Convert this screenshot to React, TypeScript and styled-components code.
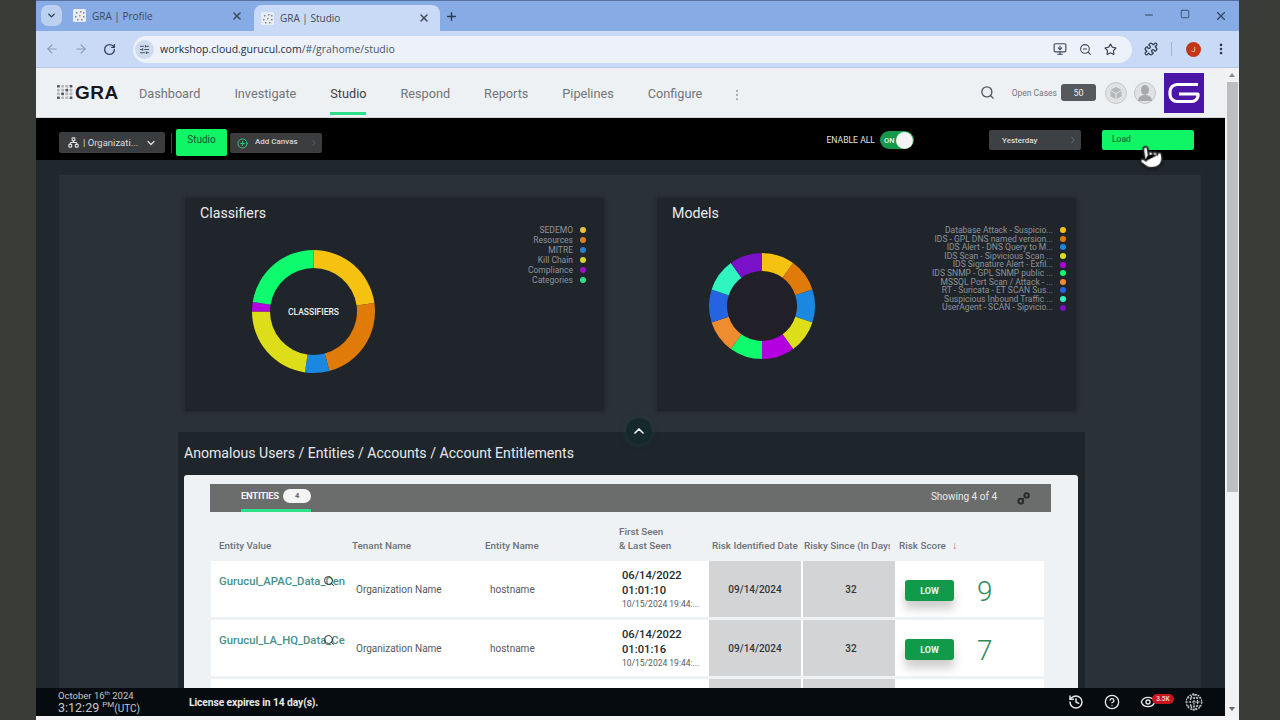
import React from 'react';
import styled, { createGlobalStyle } from 'styled-components';
import {
  ArrowLeft, ArrowRight, ChevronDown, ChevronRight, ChevronUp, CircleHelp, Eye, History, Minus,
  MonitorDown, MoreVertical, Network, Plus, PlusCircle, Pointer, Puzzle, RotateCw, Search,
  SlidersHorizontal, Square, Star, X, ZoomOut,
} from 'lucide-react';

const GlobalStyle = createGlobalStyle`
  html, body {
    margin: 0;
    padding: 0;
    height: 720px;
    overflow: hidden;
    background: #3a3c37;
  }
  * { box-sizing: border-box; }
`;

const Screen = styled.div`
  width: 1280px;
  height: 720px;
  padding: 0 41px 0 36px;
  background: #3a3c37;
  font-family: Roboto, 'Liberation Sans', sans-serif;
  position: relative;
  overflow: hidden;
`;

const Window = styled.div`
  height: 720px;
  display: flex;
  flex-direction: column;
  background: #f2f4f6;
  padding-bottom: 4px;
`;

/* browser chrome */
const TabStrip = styled.div`
  height: 31px;
  flex: none;
  display: flex;
  align-items: flex-end;
  background: #87abe4;
  border-top: 1px solid #56719f;
  padding-left: 5px;
  font-family: 'Open Sans', 'Noto Sans', sans-serif;
`;

const TabMenu = styled.div`
  width: 21px;
  height: 21px;
  margin: 0 4px 5px 0;
  border-radius: 7px;
  background: #bcd0ef;
  color: #2c3a50;
  display: flex;
  align-items: center;
  justify-content: center;
`;

const Tab = styled.div<{ $active?: boolean }>`
  width: ${p => (p.$active ? 186 : 184)}px;
  height: ${p => (p.$active ? 26 : 21)}px;
  margin: ${p => (p.$active ? '0' : '0 4px 5px 0')};
  padding: ${p => (p.$active ? '0 10px 0 7px' : '0 7px 0 7px')};
  border-radius: ${p => (p.$active ? '8px 8px 0 0' : '7px')};
  background: ${p => (p.$active ? '#c8daf5' : 'transparent')};
  color: #3d4a5c;
  font-size: 10px;
  display: flex;
  align-items: center;
  gap: 6px;
`;

const TabTitle = styled.span`
  flex: 1;
  white-space: nowrap;
`;

const NewTab = styled.div`
  margin: 0 0 8px 5px;
  color: #2c3a50;
  display: flex;
`;

const WindowControls = styled.div`
  margin-left: auto;
  align-self: center;
  display: flex;
  color: #33435c;
`;

const WindowControl = styled.div`
  width: 36px;
  display: flex;
  justify-content: center;
`;

const Toolbar = styled.div`
  height: 37px;
  flex: none;
  display: flex;
  align-items: center;
  background: #c8daf5;
  border-bottom: 1px solid #b7c8e2;
  padding-left: 1px;
`;

const NavButton = styled.div<{ $dim?: boolean }>`
  width: 29px;
  display: flex;
  justify-content: center;
  color: ${p => (p.$dim ? '#8c9db8' : '#37475e')};
`;

const Omnibox = styled.div`
  width: 999px;
  height: 27px;
  margin-left: 9px;
  padding: 0 15px 0 2px;
  border-radius: 14px;
  background: #edf2fa;
  display: flex;
  align-items: center;
  color: #3f4a5a;
`;

const SiteButton = styled.div`
  width: 19px;
  height: 19px;
  margin-right: 6px;
  border-radius: 50%;
  background: #cfdcef;
  display: flex;
  align-items: center;
  justify-content: center;
`;

const Url = styled.span`
  flex: 1;
  font-family: 'Open Sans', 'Noto Sans', sans-serif;
  font-size: 10.5px;
  color: #4a5565;
`;

const Host = styled.span`
  color: #25303e;
`;

const OmniIcons = styled.div`
  display: flex;
  align-items: center;
  gap: 12px;
`;

const ToolbarEnd = styled.div`
  flex: 1;
  display: flex;
  align-items: center;
  padding-left: 12px;
  color: #2f3d52;
`;

const ToolbarDivider = styled.div`
  width: 1px;
  height: 14px;
  margin: 0 14px 0 13px;
  background: #9fb1cc;
`;

const Avatar = styled.div`
  width: 15px;
  height: 15px;
  border-radius: 50%;
  background: #c23616;
  color: #f1d4c9;
  font-size: 8px;
  display: flex;
  align-items: center;
  justify-content: center;
  margin-right: 13px;
`;

/* app */
const Body = styled.div`
  flex: 1;
  min-height: 0;
  display: flex;
`;

const AppColumn = styled.div`
  width: 1189px;
  display: flex;
  flex-direction: column;
`;

const Scrollbar = styled.div`
  width: 14px;
  display: flex;
  flex-direction: column;
  align-items: center;
  background: #f1f2f3;
  padding: 5px 0;
`;

const ScrollArrow = styled.span<{ $down?: boolean }>`
  width: 0;
  height: 0;
  border-left: 3px solid transparent;
  border-right: 3px solid transparent;
  border-top: ${p => (p.$down ? '4px solid #666' : 'none')};
  border-bottom: ${p => (p.$down ? 'none' : '4px solid #888')};
`;

const ScrollThumb = styled.div`
  width: 11px;
  height: 410px;
  margin: 5px 0 auto;
  background: #bdbebf;
`;

const TopNav = styled.div`
  height: 50px;
  flex: none;
  display: flex;
  align-items: center;
  background: #eef1f3;
  border-bottom: 1px solid #d4d6d8;
  padding: 0 21px 0 21px;
`;

const Logo = styled.div`
  display: flex;
  align-items: center;
  gap: 1px;
  width: 82px;
`;

const LogoText = styled.span`
  font-family: 'Liberation Sans', sans-serif;
  font-weight: 700;
  font-size: 19px;
  letter-spacing: 0.5px;
  color: #15181b;
`;

const NavItems = styled.div`
  display: flex;
  align-self: flex-start;
  gap: 34px;
`;

const NavItem = styled.div<{ $active?: boolean }>`
  display: flex;
  align-items: center;
  height: 47px;
  padding-top: 4px;
  font-size: 12.7px;
  color: ${p => (p.$active ? '#3a4046' : '#70757a')};
  box-shadow: ${p => (p.$active ? 'inset 0 -3px 0 #2fe08b' : 'none')};
`;

const NavMore = styled.div`
  margin: 4px 0 0 28px;
  color: #a9acae;
  display: flex;
`;

const NavRight = styled.div`
  margin-left: auto;
  display: flex;
  align-items: center;
  color: #55595e;
`;

const OpenCases = styled.span`
  margin-left: 17px;
  font-size: 8.5px;
  color: #72777c;
`;

const CaseCount = styled.span`
  width: 35px;
  height: 17px;
  margin: 0 2px 0 4px;
  border-radius: 3px;
  background: #55585c;
  color: #eee;
  font-size: 9px;
  display: flex;
  align-items: center;
  justify-content: center;
`;

const RoundIcon = styled.div`
  width: 22px;
  height: 22px;
  margin-left: 7px;
  border-radius: 50%;
  border: 1px solid #c6c8ca;
  background: #dfe1e3;
  display: flex;
  align-items: center;
  justify-content: center;
`;

const Brand = styled.div`
  width: 40px;
  height: 40px;
  margin-left: 8px;
  background: #4b16a8;
  display: flex;
  align-items: center;
  justify-content: center;
`;

const ActionBar = styled.div`
  height: 42px;
  flex: none;
  display: flex;
  align-items: center;
  background: #000;
  padding: 2px 31px 0 23px;
`;

const OrgSelect = styled.div`
  width: 106px;
  height: 21px;
  margin-top: 5px;
  padding: 0 8px 0 9px;
  border-radius: 2px;
  background: #3b3c3d;
  color: #ddd;
  font-size: 9.5px;
  display: flex;
  align-items: center;
  gap: 4px;
`;

const OrgText = styled.span`
  flex: 1;
  white-space: nowrap;
`;

const BarDivider = styled.div`
  width: 1px;
  height: 20px;
  margin: 5px 4px 0 6px;
  background: #444;
`;

const StudioTab = styled.div`
  width: 51px;
  height: 27px;
  margin-top: 5px;
  padding-top: 5px;
  border-radius: 2px;
  background: #10f566;
  color: #12532d;
  font-size: 10px;
  text-align: center;
`;

const AddCanvas = styled.div`
  width: 92px;
  height: 20px;
  margin: 6px 0 0 3px;
  padding: 0 3px 0 7px;
  border-radius: 2px;
  background: #3b3c3d;
  color: #d8d8d8;
  font-size: 8px;
  font-weight: 500;
  display: flex;
  align-items: center;
  gap: 7px;
`;

const AddCanvasLabel = styled.span`
  padding-bottom: 4px;
`;

const EndChevron = styled.span`
  margin-left: auto;
  display: flex;
`;

const EnableAll = styled.span`
  margin-left: auto;
  font-size: 8.6px;
  color: #e0e0e0;
`;

const Toggle = styled.div`
  width: 34px;
  height: 18px;
  margin-left: 5px;
  padding: 0 1px 0 4px;
  border-radius: 9px;
  background: #159a4a;
  color: #e6f5ea;
  font-size: 7.5px;
  font-weight: 500;
  display: flex;
  align-items: center;
  justify-content: space-between;
`;

const ToggleKnob = styled.span`
  width: 17px;
  height: 17px;
  border-radius: 50%;
  background: #f3f4f3;
`;

const RangeButton = styled.div`
  width: 92px;
  height: 20px;
  margin-left: 75px;
  padding: 0 3px 0 13px;
  border-radius: 2px;
  background: #3e4143;
  color: #ddd;
  font-size: 8px;
  font-weight: 500;
  display: flex;
  align-items: center;
`;

const LoadButton = styled.div`
  width: 92px;
  height: 20px;
  margin-left: 21px;
  padding: 0 0 3px 10px;
  border-radius: 2px;
  background: #10f566;
  color: #12532d;
  font-size: 8.5px;
  display: flex;
  align-items: center;
`;

const HandCursor = styled.div`
  position: absolute;
  left: 1138px;
  top: 144px;
  display: flex;
  transform: rotate(-8deg);
  filter: drop-shadow(0 1px 1px rgba(0, 0, 0, 0.5));
`;

const Content = styled.div`
  flex: 1;
  min-height: 0;
  overflow: hidden;
  background: #20272d;
  padding: 15px 24px 0 23px;
`;

const Panel = styled.div`
  height: 100%;
  position: relative;
  background: #2a3137;
  padding: 23px 0 0 119px;
`;

const ChartsRow = styled.div`
  display: flex;
  gap: 53px;
  padding-left: 7px;
`;

const ChartCard = styled.div`
  width: 419px;
  height: 213px;
  display: flex;
  background: #20252b;
  box-shadow: 0 0 4px rgba(20, 25, 30, 0.6);
`;

const ChartMain = styled.div`
  flex: 1;
  padding: 7px 0 0 15px;
`;

const CardTitle = styled.div`
  font-size: 14.2px;
  line-height: 17px;
  color: #e9ecee;
`;

const DonutSlot = styled.div<{ $left: number; $top: number }>`
  margin: ${p => p.$top}px 0 0 ${p => p.$left}px;
  display: flex;
`;

const Legend = styled.div<{ $row: number; $top: number; $right: number }>`
  margin: ${p => p.$top}px ${p => p.$right}px 0 0;
  display: flex;
  flex-direction: column;
  align-items: flex-end;
  font-size: 8.5px;
  line-height: ${p => p.$row}px;
  color: #8f9398;
`;

const LegendRow = styled.div`
  display: flex;
  align-items: center;
  gap: 7px;
  white-space: nowrap;
`;

const LegendDot = styled.span<{ $color: string }>`
  width: 6px;
  height: 6px;
  border-radius: 50%;
  background: ${p => p.$color};
`;

const Collapse = styled.div`
  position: absolute;
  left: 567px;
  top: 243px;
  width: 26px;
  height: 26px;
  border-radius: 50%;
  background: #15292c;
  box-shadow: 0 0 6px #1d4038;
  color: #f0f3f3;
  display: flex;
  align-items: center;
  justify-content: center;
`;

const LowerPanel = styled.div`
  width: 907px;
  height: 300px;
  margin-top: 21px;
  padding: 13px 7px 0 6px;
  background: #1e252b;
`;

const SectionTitle = styled.div`
  font-size: 14.1px;
  line-height: 17px;
  color: #e6e9eb;
`;

const TableCard = styled.div`
  margin-top: 13px;
  height: 240px;
  padding: 9px 27px 0 26px;
  border-radius: 3px 3px 0 0;
  background: #eff2f5;
`;

const TabsBar = styled.div`
  height: 28px;
  display: flex;
  align-items: stretch;
  padding: 0 21px 0 31px;
  background: #6b6c6c;
`;

const EntitiesTab = styled.div`
  width: 70px;
  display: flex;
  align-items: center;
  gap: 4px;
  padding-bottom: 5px;
  color: #f1f1f1;
  font-size: 9.5px;
  font-weight: 700;
  letter-spacing: -0.3px;
  box-shadow: inset 0 -3px 0 #2fe08b;
`;

const CountPill = styled.span`
  width: 28px;
  height: 14px;
  border-radius: 7px;
  background: #f4f4f4;
  color: #666;
  font-size: 7.5px;
  display: flex;
  align-items: center;
  justify-content: center;
`;

const Showing = styled.span`
  margin-left: auto;
  align-self: center;
  padding-bottom: 3px;
  font-size: 10px;
  color: #e9e9e9;
`;

const LinkGlyph = styled.div`
  margin-left: 20px;
  align-self: center;
  display: flex;
`;

const Grid = styled.div`
  display: grid;
  grid-template-columns: 141px 133px 134px 90px 92px 94px 149px;
  width: 833px;
  margin-left: 1px;
`;

const HeaderRow = styled(Grid)`
  height: 49px;
  align-items: end;
  padding-bottom: 8px;
  font-size: 9.9px;
  font-weight: 500;
  line-height: 14px;
  color: #6d7176;
`;

const HeaderCell = styled.div<{ $pad?: number; $clip?: number }>`
  padding-left: ${p => p.$pad ?? 0}px;
  margin-right: ${p => p.$clip ?? 0}px;
  white-space: nowrap;
  overflow: hidden;
`;

const SortArrow = styled.span`
  margin-left: 4px;
  color: #d9534f;
  font-size: 10px;
`;

const Row = styled(Grid)`
  height: 56px;
  margin-bottom: 3px;
  background: #fff;
  font-size: 10px;
  color: #55595e;
`;

const EntityLink = styled.div`
  position: relative;
  padding: 14px 0 0 8px;
  color: #46908a;
  font-size: 11.3px;
  font-weight: 500;
  white-space: nowrap;
`;

const ZoomCursor = styled.span<{ $left: number }>`
  position: absolute;
  left: ${p => p.$left}px;
  top: 14px;
  color: #333;
  display: flex;
`;

const PlainCell = styled.div<{ $pad: number }>`
  display: flex;
  align-items: center;
  padding: 1px 0 0 ${p => p.$pad}px;
`;

const SeenCell = styled.div`
  padding: 7px 0 0 3px;
  font-size: 11.2px;
  font-weight: 500;
  line-height: 15px;
  color: #26292c;
`;

const SeenSmall = styled.div`
  font-size: 8.5px;
  font-weight: 400;
  line-height: 13px;
  color: #55595e;
  white-space: nowrap;
`;

const ShadedCell = styled.div<{ $gap?: boolean }>`
  margin-left: ${p => (p.$gap ? 2 : 0)}px;
  padding-left: ${p => (p.$gap ? 4 : 0)}px;
  display: flex;
  align-items: center;
  justify-content: center;
  background: #d2d4d6;
  color: #33363a;
  font-size: 10px;
  font-weight: 500;
`;

const ScoreCell = styled.div`
  display: flex;
  align-items: center;
  padding: 3px 0 0 10px;
  gap: 23px;
`;

const LowBadge = styled.span`
  width: 49px;
  height: 21px;
  border-radius: 3px;
  background: #129a4b;
  color: #e8f6ec;
  font-size: 9px;
  font-weight: 700;
  display: flex;
  align-items: center;
  justify-content: center;
  box-shadow: 0 8px 10px rgba(60, 60, 60, 0.25);
`;

const ScoreValue = styled.span`
  font-size: 28px;
  font-weight: 300;
  line-height: 30px;
  padding-top: 2px;
  color: #2f8a5a;
`;

const StatusBar = styled.div`
  height: 28px;
  flex: none;
  display: flex;
  align-items: center;
  background: #060b0f;
  padding: 0 22px 0 22px;
  color: #e8e8e8;
`;

const Clock = styled.div`
  width: 131px;
  color: #c4c7ca;
  padding-top: 2px;
`;

const ClockDate = styled.div`
  font-size: 9.5px;
  line-height: 11px;
  white-space: nowrap;
  sup { font-size: 6px; line-height: 0; }
`;

const ClockTime = styled.div`
  font-size: 12.5px;
  line-height: 14px;
  white-space: nowrap;
  sup { font-size: 8px; line-height: 0; }
  small { font-size: 10px; }
`;

const License = styled.span`
  font-size: 10.3px;
  font-weight: 700;
  letter-spacing: -0.1px;
`;

const StatusIcons = styled.div`
  margin-left: auto;
  display: flex;
  align-items: center;
  gap: 20px;
`;

const EyeWrap = styled.div`
  position: relative;
  display: flex;
  margin-right: 9px;
`;

const EyeBadge = styled.span`
  position: absolute;
  left: 12px;
  top: 0;
  width: 22px;
  height: 10px;
  border-radius: 5px;
  background: #c8161c;
  color: #f3c9c9;
  font-size: 6.5px;
  font-weight: 700;
  display: flex;
  align-items: center;
  justify-content: center;
`;

type Slice = { from: number; to: number; color: string };

const point = (c: number, r: number, deg: number) => {
  const a = ((deg - 90) * Math.PI) / 180;
  return `${(c + r * Math.cos(a)).toFixed(2)} ${(c + r * Math.sin(a)).toFixed(2)}`;
};

const slicePath = (c: number, outer: number, inner: number, s: Slice) => {
  const large = s.to - s.from > 180 ? 1 : 0;
  return `M${point(c, outer, s.from)} A${outer} ${outer} 0 ${large} 1 ${point(c, outer, s.to)} L${point(c, inner, s.to)} A${inner} ${inner} 0 ${large} 0 ${point(c, inner, s.from)} Z`;
};

const Donut: React.FC<{ outer: number; inner: number; slices: Slice[]; hole?: string; label?: string }> = ({ outer, inner, slices, hole, label }) => {
  const c = outer + 1;
  return (
    <svg width={c * 2} height={c * 2}>
      {hole && <circle cx={c} cy={c} r={inner} fill={hole} />}
      {slices.map(s => <path key={s.from} d={slicePath(c, outer, inner, s)} fill={s.color} />)}
      {label && (
        <text x={c} y={c + 3} textAnchor="middle" fontSize="8.5" fontWeight="500" fill="#eef0f1" fontFamily="Roboto, sans-serif">
          {label}
        </text>
      )}
    </svg>
  );
};

const classifierSlices: Slice[] = [
  { from: 0, to: 82, color: '#f5c211' },
  { from: 82, to: 165, color: '#e07b0a' },
  { from: 165, to: 188, color: '#1a87e0' },
  { from: 188, to: 270, color: '#dddd1a' },
  { from: 270, to: 279, color: '#b400e0' },
  { from: 279, to: 360, color: '#0ffb6e' },
];

const classifierLegend = [
  ['SEDEMO', '#e8c33a'],
  ['Resources', '#d97f26'],
  ['MITRE', '#2a7fc9'],
  ['Kill Chain', '#d5d62f'],
  ['Compliance', '#9a12c4'],
  ['Categories', '#2fe08b'],
];

const modelColors = ['#f5c211', '#e07b0a', '#1a87e0', '#dddd1a', '#b400e0', '#0ffb6e', '#f08c30', '#2563e0', '#30f5c0', '#7a10c8'];
const modelSlices: Slice[] = modelColors.map((color, i) => ({ from: i * 36, to: (i + 1) * 36, color }));

const modelNames = [
  'Database Attack - Suspicio...',
  'IDS - GPL DNS named version...',
  'IDS Alert - DNS Query to M...',
  'IDS Scan - Sipvicious Scan ...',
  'IDS Signature Alert - Exfil...',
  'IDS SNMP - GPL SNMP public ...',
  'MSSQL Port Scan / Attack - ...',
  'RT - Suricata - ET SCAN Sus...',
  'Suspicious Inbound Traffic ...',
  'UserAgent - SCAN - Sipvicio...',
];

const rows = [
  { entity: 'Gurucul_APAC_Data_Cen', cursor: 112, time: '01:01:10', score: 9 },
  { entity: 'Gurucul_LA_HQ_Data_Ce', cursor: 112, time: '01:01:16', score: 7 },
];

const Favicon: React.FC = () => (
  <svg width="13" height="13" viewBox="0 0 13 13">
    <rect width="13" height="13" rx="1.5" fill="#e8edf5" />
    {[[3, 3], [7, 2], [10, 3], [2, 7], [6, 6], [10, 7], [4, 10], [8, 10]].map(([x, y]) => (
      <rect key={`${x}-${y}`} x={x} y={y} width="1.5" height="1.5" fill={x === 6 ? '#d9803a' : '#7c8590'} />
    ))}
  </svg>
);

const LogoDots: React.FC = () => (
  <svg width="17" height="15" viewBox="0 0 17 15">
    {[0, 1, 2, 3].map(r => [0, 1, 2, 3].map(c => (
      <rect key={`${r}${c}`} x={c * 4.2} y={r * 3.8} width="2.8" height="2.6" rx="0.6" fill={(r + c) % 3 === 0 ? '#55595e' : '#b4b7ba'} />
    )))}
  </svg>
);

const GravatarBox: React.FC = () => (
  <svg width="14" height="14" viewBox="0 0 14 14" fill="#b4b7ba">
    <path d="M7 1 12.5 4 7 7 1.5 4Z" />
    <path d="M1.5 5 6.4 7.8V13L1.5 10.2Z" />
    <path d="M12.5 5 7.6 7.8V13L12.5 10.2Z" />
  </svg>
);

const UserGlyph: React.FC = () => (
  <svg width="16" height="18" viewBox="0 0 16 18" fill="#a7a9ac">
    <ellipse cx="8" cy="6" rx="4" ry="5" />
    <path d="M1 17c0-4 3-5 5-6h4c2 1 5 2 5 6Z" />
  </svg>
);

const BrandMark: React.FC = () => (
  <svg width="32" height="22" viewBox="0 0 32 22" fill="none" stroke="#fff" strokeWidth="3.2" strokeLinejoin="round">
    <path d="M30 2.5H9a7 7 0 0 0-7 7v3a7 7 0 0 0 7 7h15a6 6 0 0 0 6-6v-1.5H11" />
  </svg>
);

const TwoCircles: React.FC = () => (
  <svg width="13" height="13" viewBox="0 0 13 13" fill="none" stroke="#2a2c2e" strokeWidth="2">
    <circle cx="3.8" cy="9.2" r="2.4" />
    <circle cx="9.6" cy="3.4" r="2.2" />
    <path d="M5.5 7.5 8 5" strokeWidth="1" />
  </svg>
);

const DottedGlobe: React.FC = () => (
  <svg width="18" height="18" viewBox="0 0 15 15" fill="none" stroke="#c4c7ca" strokeWidth="1" strokeDasharray="1.6 0.8">
    <circle cx="7.5" cy="7.5" r="6.5" />
    <ellipse cx="7.5" cy="7.5" rx="3" ry="6.5" />
    <path d="M1 7.5h13M2 4h11M2 11h11M7.5 1v13" />
  </svg>
);

const App: React.FC = () => (
  <Screen>
    <GlobalStyle />
    <Window>
      <TabStrip>
        <TabMenu><ChevronDown size={11} strokeWidth={3} /></TabMenu>
        <Tab>
          <Favicon />
          <TabTitle>GRA | Profile</TabTitle>
          <X size={12} strokeWidth={3} />
        </Tab>
        <Tab $active>
          <Favicon />
          <TabTitle>GRA | Studio</TabTitle>
          <X size={12} strokeWidth={3} />
        </Tab>
        <NewTab><Plus size={13} strokeWidth={2.5} /></NewTab>
        <WindowControls>
          <WindowControl><Minus size={12} /></WindowControl>
          <WindowControl><Square size={10} /></WindowControl>
          <WindowControl><X size={14} /></WindowControl>
        </WindowControls>
      </TabStrip>
      <Toolbar>
        <NavButton $dim><ArrowLeft size={14} /></NavButton>
        <NavButton $dim><ArrowRight size={14} /></NavButton>
        <NavButton><RotateCw size={13} strokeWidth={2.5} /></NavButton>
        <Omnibox>
          <SiteButton><SlidersHorizontal size={11} /></SiteButton>
          <Url><Host>workshop.cloud.gurucul.com</Host>/#/grahome/studio</Url>
          <OmniIcons>
            <MonitorDown size={14} />
            <ZoomOut size={13} />
            <Star size={13} strokeWidth={2.2} />
          </OmniIcons>
        </Omnibox>
        <ToolbarEnd>
          <Puzzle size={14} strokeWidth={2.2} />
          <ToolbarDivider />
          <Avatar>J</Avatar>
          <MoreVertical size={14} strokeWidth={2.5} />
        </ToolbarEnd>
      </Toolbar>
      <Body>
        <AppColumn>
          <TopNav>
            <Logo>
              <LogoDots />
              <LogoText>GRA</LogoText>
            </Logo>
            <NavItems>
              <NavItem>Dashboard</NavItem>
              <NavItem>Investigate</NavItem>
              <NavItem $active>Studio</NavItem>
              <NavItem>Respond</NavItem>
              <NavItem>Reports</NavItem>
              <NavItem>Pipelines</NavItem>
              <NavItem>Configure</NavItem>
            </NavItems>
            <NavMore><MoreVertical size={14} /></NavMore>
            <NavRight>
              <Search size={15} strokeWidth={2.2} />
              <OpenCases>Open Cases</OpenCases>
              <CaseCount>50</CaseCount>
              <RoundIcon><GravatarBox /></RoundIcon>
              <RoundIcon><UserGlyph /></RoundIcon>
              <Brand><BrandMark /></Brand>
            </NavRight>
          </TopNav>
          <ActionBar>
            <OrgSelect>
              <Network size={11} strokeWidth={2.5} />
              <OrgText>| Organizati...</OrgText>
              <ChevronDown size={12} strokeWidth={2.5} />
            </OrgSelect>
            <BarDivider />
            <StudioTab>Studio</StudioTab>
            <AddCanvas>
              <PlusCircle size={11} color="#35d07f" />
              <AddCanvasLabel>Add Canvas</AddCanvasLabel>
              <EndChevron><ChevronRight size={10} color="#5a6a5e" /></EndChevron>
            </AddCanvas>
            <EnableAll>ENABLE ALL</EnableAll>
            <Toggle>ON<ToggleKnob /></Toggle>
            <RangeButton>
              Yesterday
              <EndChevron><ChevronRight size={10} color="#777" /></EndChevron>
            </RangeButton>
            <LoadButton>Load</LoadButton>
          </ActionBar>
          <Content>
            <Panel>
              <ChartsRow>
                <ChartCard>
                  <ChartMain>
                    <CardTitle>Classifiers</CardTitle>
                    <DonutSlot $left={51} $top={27}>
                      <Donut outer={61.5} inner={43.5} slices={classifierSlices} label="CLASSIFIERS" />
                    </DonutSlot>
                  </ChartMain>
                  <Legend $row={10} $top={27} $right={18}>
                    {classifierLegend.map(([name, color]) => (
                      <LegendRow key={name}>{name}<LegendDot $color={color} /></LegendRow>
                    ))}
                  </Legend>
                </ChartCard>
                <ChartCard>
                  <ChartMain>
                    <CardTitle>Models</CardTitle>
                    <DonutSlot $left={36} $top={30}>
                      <Donut outer={53} inner={35} slices={modelSlices} hole="#211f28" />
                    </DonutSlot>
                  </ChartMain>
                  <Legend $row={8.6} $top={28} $right={10}>
                    {modelNames.map((name, i) => (
                      <LegendRow key={name}>{name}<LegendDot $color={modelColors[i]} /></LegendRow>
                    ))}
                  </Legend>
                </ChartCard>
              </ChartsRow>
              <Collapse><ChevronUp size={16} strokeWidth={2.5} /></Collapse>
              <LowerPanel>
                <SectionTitle>Anomalous Users / Entities / Accounts / Account Entitlements</SectionTitle>
                <TableCard>
                  <TabsBar>
                    <EntitiesTab>ENTITIES <CountPill>4</CountPill></EntitiesTab>
                    <Showing>Showing 4 of 4</Showing>
                    <LinkGlyph><TwoCircles /></LinkGlyph>
                  </TabsBar>
                  <HeaderRow>
                    <HeaderCell $pad={8}>Entity Value</HeaderCell>
                    <HeaderCell>Tenant Name</HeaderCell>
                    <HeaderCell>Entity Name</HeaderCell>
                    <HeaderCell>First Seen<br />&amp; Last Seen</HeaderCell>
                    <HeaderCell $pad={3}>Risk Identified Date</HeaderCell>
                    <HeaderCell $pad={3} $clip={5}>Risky Since (In Days)</HeaderCell>
                    <HeaderCell $pad={4}>Risk Score <SortArrow>↓</SortArrow></HeaderCell>
                  </HeaderRow>
                  {rows.map(r => (
                    <Row key={r.entity}>
                      <EntityLink>
                        {r.entity}
                        <ZoomCursor $left={r.cursor}><Search size={12} /></ZoomCursor>
                      </EntityLink>
                      <PlainCell $pad={4}>Organization Name</PlainCell>
                      <PlainCell $pad={5}>hostname</PlainCell>
                      <SeenCell>
                        06/14/2022<br />{r.time}
                        <SeenSmall>10/15/2024 19:44:...</SeenSmall>
                      </SeenCell>
                      <ShadedCell>09/14/2024</ShadedCell>
                      <ShadedCell $gap>32</ShadedCell>
                      <ScoreCell>
                        <LowBadge>LOW</LowBadge>
                        <ScoreValue>{r.score}</ScoreValue>
                      </ScoreCell>
                    </Row>
                  ))}
                  <Row>
                    <div />
                    <div />
                    <div />
                    <div />
                    <ShadedCell />
                    <ShadedCell $gap />
                    <div />
                  </Row>
                </TableCard>
              </LowerPanel>
            </Panel>
          </Content>
          <StatusBar>
            <Clock>
              <ClockDate>October 16<sup>th</sup> 2024</ClockDate>
              <ClockTime>3:12:29 <sup>PM</sup><small>(UTC)</small></ClockTime>
            </Clock>
            <License>License expires in 14 day(s).</License>
            <StatusIcons>
              <History size={16} strokeWidth={2.2} />
              <CircleHelp size={16} strokeWidth={2} />
              <EyeWrap>
                <Eye size={16} strokeWidth={2} />
                <EyeBadge>3.5K</EyeBadge>
              </EyeWrap>
              <DottedGlobe />
            </StatusIcons>
          </StatusBar>
        </AppColumn>
        <Scrollbar>
          <ScrollArrow />
          <ScrollThumb />
          <ScrollArrow $down />
        </Scrollbar>
      </Body>
    </Window>
    <HandCursor><Pointer size={26} fill="#fff" color="#222" strokeWidth={1.5} /></HandCursor>
  </Screen>
);

export default App;
